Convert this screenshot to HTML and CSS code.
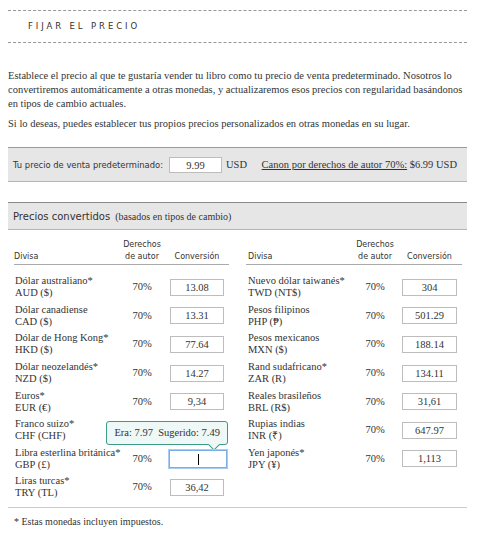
FILE: index.html
```html
<!DOCTYPE html>
<html lang="es">
<head>
<meta charset="utf-8">
<title>Fijar el precio</title>
<link rel="stylesheet" href="styles.css">
</head>
<body>
<div class="page">
  <div class="section-title">FIJAR EL PRECIO</div>
  <div class="intro">
    <p>Establece el precio al que te gustaría vender tu libro como tu precio de venta predeterminado. Nosotros lo convertiremos automáticamente a otras monedas, y actualizaremos esos precios con regularidad basándonos en tipos de cambio actuales.</p>
    <p>Si lo deseas, puedes establecer tus propios precios personalizados en otras monedas en su lugar.</p>
  </div>
  <div class="default-bar">
    <span class="default-label">Tu precio de venta predeterminado:</span>
    <span class="box default-box">9.99</span>
    <span class="cur">USD</span>
    <span class="royalty"><span class="ul">Canon por derechos de autor 70%:</span> $6.99 USD</span>
  </div>
  <div class="conv-bar">
    <span class="conv-title">Precios convertidos</span>
    <span class="conv-note">(basados en tipos de cambio)</span>
  </div>
  <div class="tables">
    <div class="ctable left">
      <div class="thead">
        <div class="th-name">Divisa</div>
        <div class="th-mid">Derechos<br>de autor</div>
        <div class="th-conv">Conversión</div>
      </div>
      <div class="rows">
        <div class="row"><div class="name">Dólar australiano*<br>AUD ($)</div><div class="pct">70%</div><div class="cell"><span class="box">13.08</span></div></div>
        <div class="row"><div class="name">Dólar canadiense<br>CAD ($)</div><div class="pct">70%</div><div class="cell"><span class="box">13.31</span></div></div>
        <div class="row"><div class="name">Dólar de Hong Kong*<br>HKD ($)</div><div class="pct">70%</div><div class="cell"><span class="box">77.64</span></div></div>
        <div class="row"><div class="name">Dólar neozelandés*<br>NZD ($)</div><div class="pct">70%</div><div class="cell"><span class="box">14.27</span></div></div>
        <div class="row"><div class="name">Euros*<br>EUR (€)</div><div class="pct">70%</div><div class="cell"><span class="box">9,34</span></div></div>
        <div class="row"><div class="name">Franco suizo*<br>CHF (CHF)</div><div class="pct"></div><div class="cell"></div></div>
        <div class="row"><div class="name">Libra esterlina británica*<br>GBP (£)</div><div class="pct">70%</div><div class="cell focus-cell"><span class="tooltip">Era: 7.97&nbsp; Sugerido: 7.49</span><span class="box focused"><span class="caret"></span></span></div></div>
        <div class="row"><div class="name">Liras turcas*<br>TRY (TL)</div><div class="pct">70%</div><div class="cell"><span class="box">36,42</span></div></div>
      </div>
    </div>
    <div class="ctable right">
      <div class="thead">
        <div class="th-name">Divisa</div>
        <div class="th-mid">Derechos<br>de autor</div>
        <div class="th-conv">Conversión</div>
      </div>
      <div class="rows">
        <div class="row"><div class="name">Nuevo dólar taiwanés*<br>TWD (NT$)</div><div class="pct">70%</div><div class="cell"><span class="box">304</span></div></div>
        <div class="row"><div class="name">Pesos filipinos<br>PHP (₱)</div><div class="pct">70%</div><div class="cell"><span class="box">501.29</span></div></div>
        <div class="row"><div class="name">Pesos mexicanos<br>MXN ($)</div><div class="pct">70%</div><div class="cell"><span class="box">188.14</span></div></div>
        <div class="row"><div class="name">Rand sudafricano*<br>ZAR (R)</div><div class="pct">70%</div><div class="cell"><span class="box">134.11</span></div></div>
        <div class="row"><div class="name">Reales brasileños<br>BRL (R$)</div><div class="pct">70%</div><div class="cell"><span class="box">31,61</span></div></div>
        <div class="row"><div class="name">Rupias indias<br>INR (₹)</div><div class="pct">70%</div><div class="cell"><span class="box">647.97</span></div></div>
        <div class="row"><div class="name">Yen japonés*<br>JPY (¥)</div><div class="pct">70%</div><div class="cell"><span class="box">1,113</span></div></div>
      </div>
    </div>
  </div>
  <div class="footnote">* Estas monedas incluyen impuestos.</div>
</div>
</body>
</html>
```

FILE: styles.css
```css
* { box-sizing: border-box; }
body {
  margin: 8px;
  background: #fff;
  color: #333;
  font-family: "Liberation Serif", "Times New Roman", serif;
  font-size: 10.5px;
}
.page { width: 459px; }

.section-title {
  margin-top: 2px;
  height: 33px;
  border-top: 1px dashed #999;
  border-bottom: 1px dashed #999;
  padding-left: 20px;
  line-height: 31px;
  font-family: "DejaVu Sans", Verdana, sans-serif;
  font-size: 8.5px;
  letter-spacing: 2.9px;
  color: #333;
}

.intro { margin-top: 26px; }
.intro p { margin: 0 0 6px; line-height: 14px; }

.default-bar {
  margin-top: 16px;
  height: 35px;
  background: #e6e6e6;
  border-top: 1px solid #999;
  border-bottom: 1px solid #b5b5b5;
  display: flex;
  align-items: center;
  padding-left: 5px;
  white-space: nowrap;
}
.default-bar > * { flex-shrink: 0; }
.default-label {
  font-family: "DejaVu Sans", Verdana, sans-serif;
  font-size: 8.4px;
}
.box {
  display: inline-block;
  background: #fff;
  border: 1px solid #bdbdbd;
  text-align: center;
  height: 17px;
  line-height: 15px;
  width: 54px;
}
.default-box { width: 53px; height: 16px; margin-left: 6px; }
.cur { margin-left: 4px; }
.royalty { margin-left: auto; margin-right: 10px; }
.ul { text-decoration: underline; }

.conv-bar {
  margin-top: 20px;
  height: 28px;
  background: #e6e6e6;
  border-top: 1px solid #8a8a8a;
  border-bottom: 1px solid #b5b5b5;
  display: flex;
  align-items: center;
  padding-left: 5px;
  gap: 5px;
}
.conv-title {
  font-family: "DejaVu Sans", Verdana, sans-serif;
  font-size: 10px;
}
.conv-note { font-size: 10px; }

.tables {
  display: flex;
  gap: 17px;
  padding: 0 5px 0 6px;
}
.ctable { width: 215px; }
.ctable.right { width: 216px; }

.thead {
  display: grid;
  grid-template-columns: minmax(0, 1fr) 56px 54px 5px;
  align-items: end;
  padding-top: 9px;
  border-bottom: 1px solid #aaa;
  font-family: "DejaVu Sans", Verdana, sans-serif;
  font-size: 8px;
  line-height: 12px;
  padding-bottom: 1px;
}
.right .thead { grid-template-columns: minmax(0, 1fr) 54px 55px 5px; }
.right .th-name { padding-left: 2px; }
.th-mid, .th-conv { text-align: center; }

.rows { padding-top: 8px; }
.row {
  display: grid;
  grid-template-columns: minmax(0, 1fr) 56px 54px 5px;
  align-items: center;
  height: 28.6px;
  line-height: 12px;
}
.right .row { grid-template-columns: minmax(0, 1fr) 54px 55px 5px; }
.name { white-space: nowrap; }
.left .name { padding-left: 1px; }
.right .name { padding-left: 2px; }
.pct { text-align: center; }
.cell { position: relative; height: 17px; }
.right .box { width: 55px; }

.box.focused {
  width: 58px;
  height: 18px;
  margin-left: -1px;
  border: 1px solid #7aaee6;
  box-shadow: 0 0 0 1px #a9cdf2;
  position: relative;
}
.caret {
  position: absolute;
  left: 28px;
  top: 3px;
  width: 1px;
  height: 11px;
  background: #000;
}
.tooltip {
  position: absolute;
  right: -4px;
  bottom: 22px;
  white-space: nowrap;
  background: #eef8f6;
  border: 1px solid #3c9a88;
  border-radius: 3px;
  padding: 0 7px;
  height: 24px;
  line-height: 22px;
  font-size: 10.5px;
  color: #333;
}
.tooltip::after {
  content: "";
  position: absolute;
  right: 9px;
  bottom: -5px;
  width: 7px;
  height: 7px;
  background: #eef8f6;
  border-right: 1px solid #3c9a88;
  border-bottom: 1px solid #3c9a88;
  transform: rotate(45deg);
}

.footnote {
  margin-top: 5px;
  border-top: 1px solid #ccc;
  padding: 8px 0 0 6px;
  line-height: 12px;
  font-size: 10px;
}
```
